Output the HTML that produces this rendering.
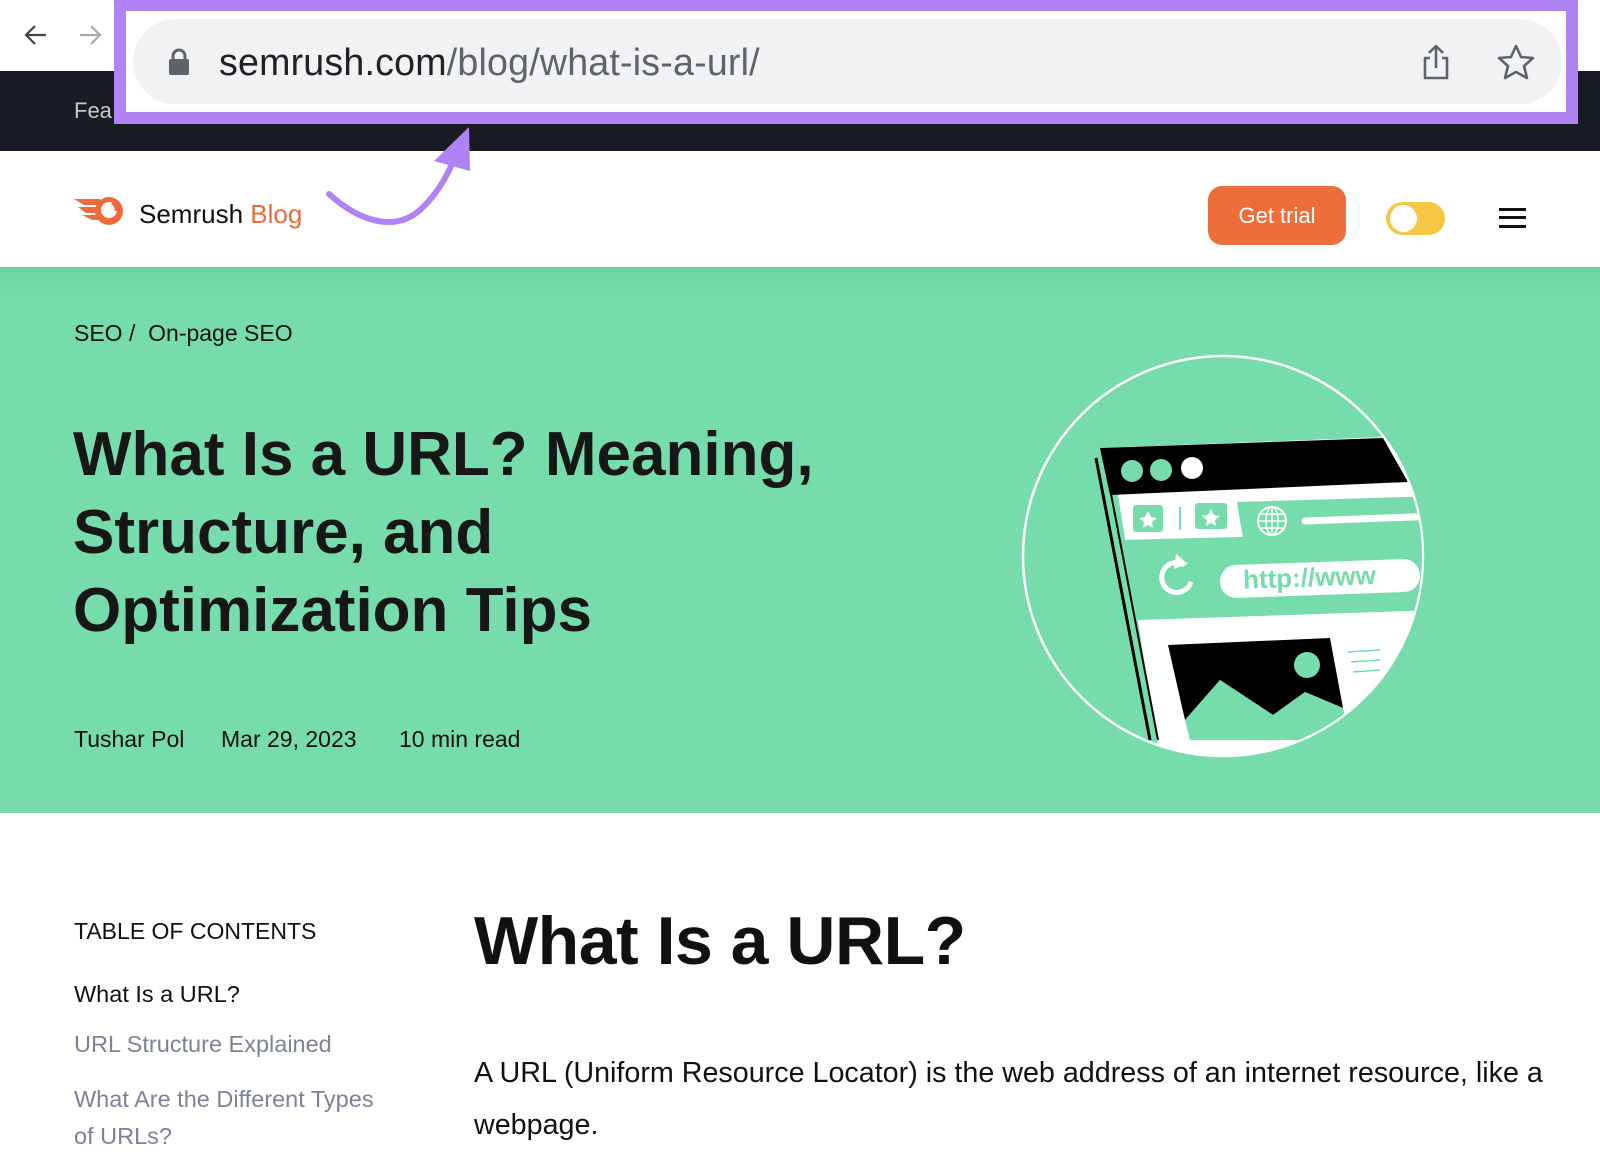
<!DOCTYPE html>
<html><head><meta charset="utf-8"><style>
*{margin:0;padding:0;box-sizing:border-box}
body{width:1600px;height:1165px;overflow:hidden;background:#fff;font-family:"Liberation Sans",sans-serif;position:relative;color:#111}
.abs{position:absolute}
</style></head><body>
<div class="abs" style="left:0;top:0;width:1600px;height:71px;background:#fff"></div>
<svg class="abs" style="left:22px;top:22px" width="90" height="26" viewBox="0 0 90 26"><path d="M24 13H4M13 4L4 13l9 9" stroke="#444" stroke-width="2.2" fill="none"/><path d="M58 13h20M69 4l9 9-9 9" stroke="#aaa" stroke-width="2.2" fill="none"/></svg>
<div class="abs" style="left:0;top:71px;width:1600px;height:80px;background:#181b22"></div>
<div class="abs" style="left:74px;top:98px;font-size:22px;color:#c8c9cc">Fea</div>
<div class="abs" style="left:114px;top:0;width:1464px;height:124px;border:12px solid #b083f5;border-top-width:11px;background:#fff"></div>
<div class="abs" style="left:133px;top:19px;width:1429px;height:85px;border-radius:43px;background:#f1f2f4"></div>
<svg class="abs" style="left:168px;top:48px" width="22" height="28" viewBox="0 0 22 28"><rect x="1" y="11" width="20" height="16" rx="2" fill="#5f6368"/><path d="M5 12V8a6 6 0 0 1 12 0v4" stroke="#5f6368" stroke-width="3" fill="none"/></svg>
<div class="abs" style="left:219px;top:41px;font-size:37.6px;color:#5f6368;letter-spacing:.2px"><span style="color:#202124">semrush.com</span>/blog/what-is-a-url/</div>
<svg class="abs" style="left:1420px;top:42px" width="32" height="40" viewBox="0 0 32 40"><path d="M16 26V4M9 11l7-7 7 7M10 16H5v20h22V16h-5" stroke="#5f6368" stroke-width="2.6" fill="none" stroke-linejoin="round"/></svg>
<svg class="abs" style="left:1496px;top:43px" width="40" height="38" viewBox="0 0 40 38"><path d="M20 3l5 11 12 1-9 8 3 12-11-6-11 6 3-12-9-8 12-1z" stroke="#5f6368" stroke-width="2.6" fill="none" stroke-linejoin="round"/></svg>
<svg class="abs" style="left:72px;top:194px" width="56" height="36" viewBox="0 0 56 36"><path d="M2 5h26v6H12zM6 13h22v6H14zM10 21h18v5h-8z" fill="#ef6c3a"/><circle cx="37" cy="17" r="14" fill="#ef6c3a"/><circle cx="37" cy="16" r="8" fill="#fff"/><path d="M40 9a8 8 0 0 1 4 8" stroke="#ef6c3a" stroke-width="3" fill="none"/></svg>
<div class="abs" style="left:139px;top:199px;font-size:26px;color:#111">Semrush <span style="color:#ef6c3a">Blog</span></div>
<svg class="abs" style="left:0;top:0" width="600" height="260"><path d="M329 194C360 222 395 232 420 210 C440 192 450 170 458 150" stroke="#b083f5" stroke-width="6" fill="none" stroke-linecap="round"/><path d="M434 161L469 127 470 171z" fill="#b083f5"/></svg>
<div class="abs" style="left:1208px;top:186px;width:138px;height:59px;border-radius:14px;background:#ed6d3b;color:#fff;font-size:22px;text-align:center;line-height:59px">Get trial</div>
<div class="abs" style="left:1386px;top:202px;width:59px;height:33px;border-radius:17px;background:#f6c744"></div>
<div class="abs" style="left:1390px;top:205px;width:27px;height:27px;border-radius:50%;background:#fff"></div>
<div class="abs" style="left:1499px;top:208px;width:27px;height:3px;background:#111"></div>
<div class="abs" style="left:1499px;top:216px;width:27px;height:3px;background:#111"></div>
<div class="abs" style="left:1499px;top:225px;width:27px;height:3px;background:#111"></div>
<div class="abs" style="left:0;top:267px;width:1600px;height:546px;background:#76dcab"></div>
<div class="abs" style="left:0;top:267px;width:1600px;height:30px;background:linear-gradient(#6cd2a1,#76dcab)"></div>
<div class="abs" style="left:74px;top:320px;font-size:23px;color:#111">SEO / &nbsp;On-page SEO</div>
<div class="abs" style="left:73px;top:416px;font-size:62px;font-weight:bold;line-height:78px;letter-spacing:0px;color:#171717">What Is a URL? Meaning,<br>Structure, and<br>Optimization Tips</div>
<div class="abs" style="left:74px;top:726px;font-size:23px;color:#111">Tushar Pol</div>
<div class="abs" style="left:221px;top:726px;font-size:23px;color:#111">Mar 29, 2023</div>
<div class="abs" style="left:399px;top:726px;font-size:23px;color:#111">10 min read</div>
<svg class="abs" style="left:1000px;top:340px" width="450" height="430" viewBox="0 0 450 430">
<defs><clipPath id="c"><circle cx="223" cy="216" r="199"/></clipPath></defs>
<circle cx="223" cy="216" r="200" fill="none" stroke="#fff" stroke-width="2.5"/>
<g clip-path="url(#c)">
<path d="M100 108L385 97 440 150 440 420 160 420 118 155z" fill="#fff"/>
<path d="M100 108L383 98 408 142 110 155z" fill="#000"/>
<circle cx="132" cy="131" r="11" fill="#76dcab"/><circle cx="161" cy="130" r="11" fill="#76dcab"/><circle cx="192" cy="128" r="11" fill="#fff"/>
<path d="M120 200L440 192 440 270 138 280z" fill="#76dcab"/>
<rect x="133" y="165" width="30" height="27" rx="3" fill="#76dcab"/>
<rect x="195" y="163" width="32" height="26" rx="3" fill="#76dcab"/>
<path d="M148 171l3 6 6 1-5 4 1 6-5-3-5 3 1-6-5-4 6-1z M211 169l3 6 6 1-5 4 1 6-5-3-5 3 1-6-5-4 6-1z" fill="#fff"/>
<path d="M180 167v23" stroke="#76dcab" stroke-width="2"/>
<path d="M237 162L440 156 440 196 243 199z" fill="#76dcab"/>
<circle cx="272" cy="181" r="14" fill="none" stroke="#fff" stroke-width="2"/>
<path d="M258 181h28M272 167v28M261 174h22M261 188h22" stroke="#fff" stroke-width="1.5"/>
<ellipse cx="272" cy="181" rx="6" ry="14" fill="none" stroke="#fff" stroke-width="1.5"/>
<path d="M305 181L440 176" stroke="#fff" stroke-width="7" stroke-linecap="round"/>
<path d="M185 225a15 15 0 1 0 6 17" stroke="#fff" stroke-width="5" fill="none"/>
<path d="M176 214l12 10-14 5z" fill="#fff"/>
<rect x="220" y="222" width="200" height="33" rx="16" fill="#fff" transform="rotate(-2 320 238)"/>
<text x="243" y="246" font-family="Liberation Sans,sans-serif" font-weight="bold" font-size="26" fill="#76dcab" transform="rotate(-2 320 238)">http://www</text>
<path d="M168 305L330 298 343 368 305 352 273 375 220 340 185 380z" fill="#000"/>
<path d="M185 380L220 340 273 375 305 352 343 368 350 400 190 400z" fill="#76dcab"/>
<circle cx="307" cy="325" r="13" fill="#76dcab"/>
<path d="M348 312L380 310M351 322L380 320M353 332L380 330" stroke="#76dcab" stroke-width="1.5"/>
<path d="M96 118L150 400" stroke="#000" stroke-width="3"/>
<path d="M103 112L158 400" stroke="#000" stroke-width="2"/>
</g>
</svg>
<div class="abs" style="left:74px;top:918px;font-size:23px;color:#111">TABLE OF CONTENTS</div>
<div class="abs" style="left:74px;top:981px;font-size:23.5px;color:#111">What Is a URL?</div>
<div class="abs" style="left:74px;top:1031px;font-size:23.5px;color:#7d8296">URL Structure Explained</div>
<div class="abs" style="left:74px;top:1081px;font-size:23.5px;color:#7d8296;line-height:37px">What Are the Different Types<br>of URLs?</div>
<div class="abs" style="left:474px;top:902px;font-size:68px;font-weight:bold;letter-spacing:-0.5px;color:#111">What Is a URL?</div>
<div class="abs" style="left:474px;top:1047px;font-size:28.7px;line-height:52px;color:#111;width:1125px">A URL (Uniform Resource Locator) is the web address of an internet resource, like a<br>webpage.</div>
</body></html>
